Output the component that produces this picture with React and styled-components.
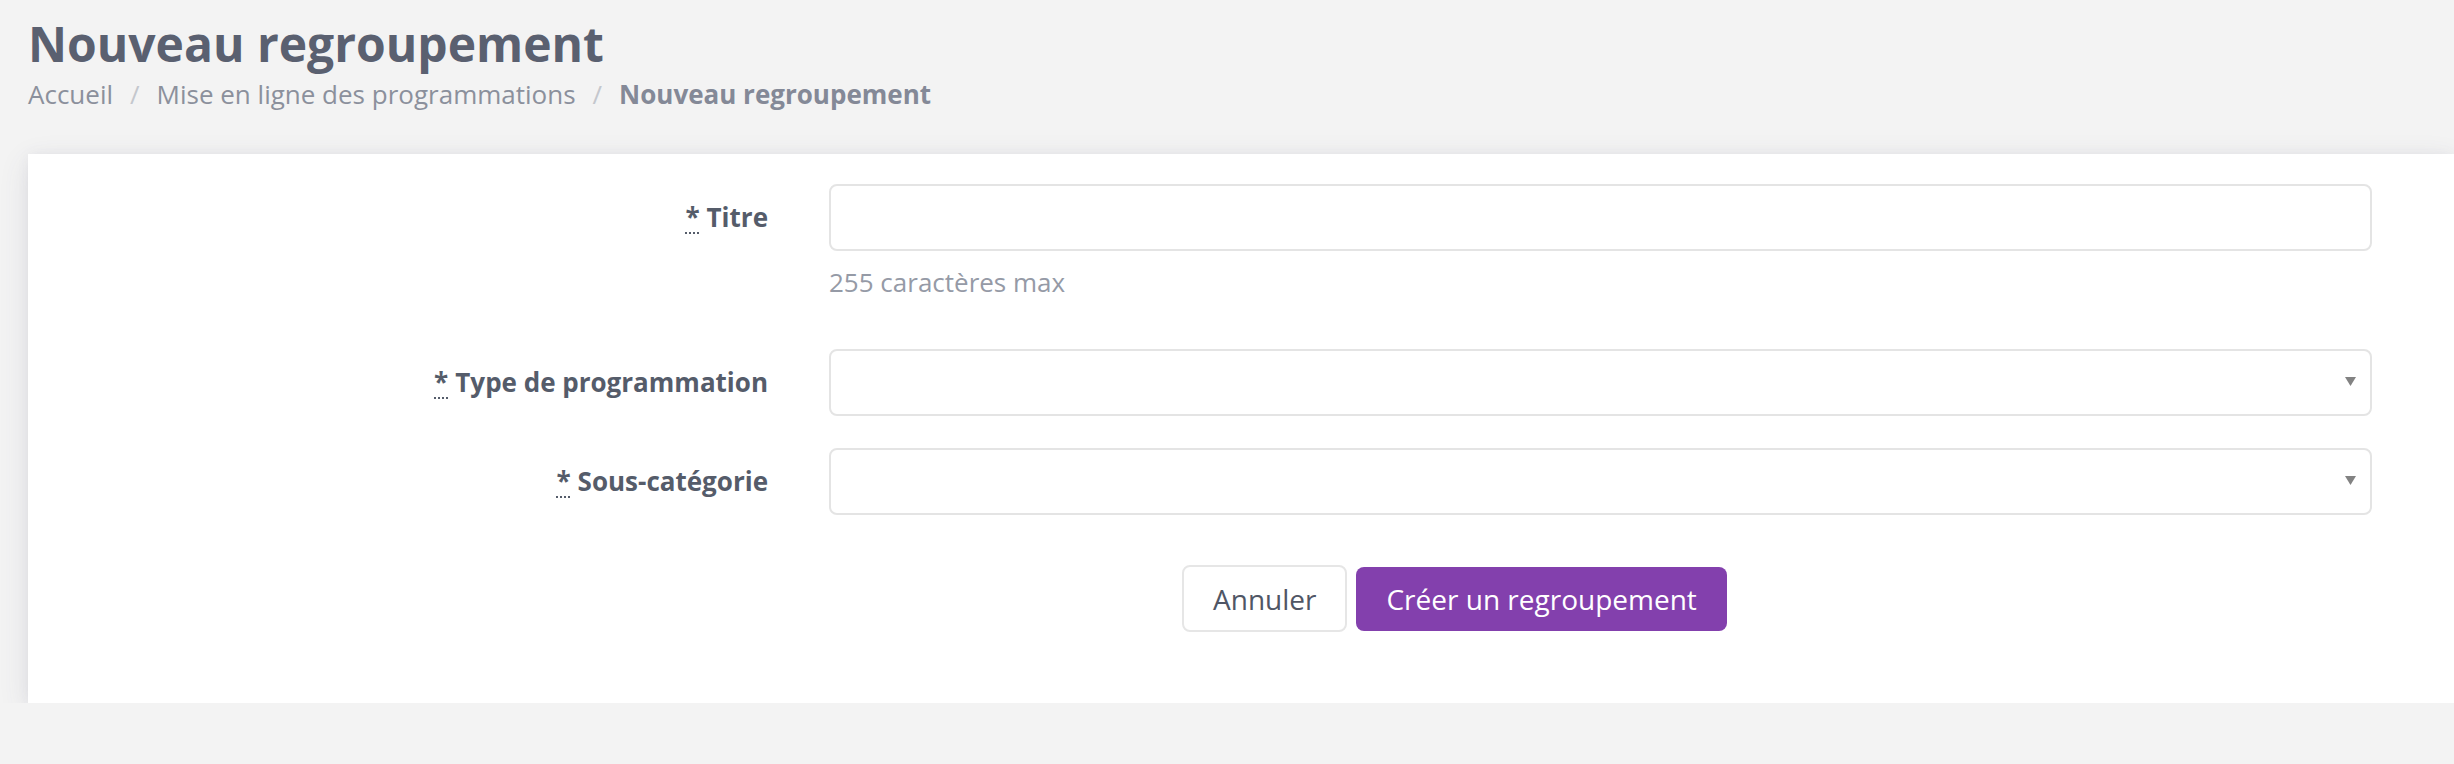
import React from "react";
import styled, { createGlobalStyle } from "styled-components";

const GlobalStyle = createGlobalStyle`
  html, body {
    margin: 0;
    padding: 0;
    background: #f3f3f3;
    overflow: hidden;
  }
  body {
    font-family: "Open Sans", "DejaVu Sans", sans-serif;
    color: #555c6a;
  }
  * { box-sizing: border-box; }
`;

const Page = styled.div`
  padding: 15px 0 0 28px;
`;

const Header = styled.header`
  margin-bottom: 42px;
`;

const Title = styled.h1`
  margin: 0;
  font-size: 48px;
  line-height: 58px;
  font-weight: 700;
  color: #5a6070;
`;

const Breadcrumb = styled.nav`
  display: flex;
  align-items: center;
  margin-top: 3px;
  font-size: 26px;
  line-height: 36px;
  color: #8b909c;
`;

const Crumb = styled.span`
  font-weight: ${(p) => (p.$active ? 700 : 400)};
  color: ${(p) => (p.$active ? "#848997" : "#8b909c")};
`;

const Sep = styled.span`
  color: #c4c7cd;
  padding: 0 17px;
`;

const Card = styled.section`
  background: #ffffff;
  padding: 30px 82px 71px 0;
  box-shadow: 0 8px 28px rgba(70, 78, 110, 0.12), 0 0 12px rgba(70, 78, 110, 0.05);
`;

const Row = styled.div`
  display: grid;
  grid-template-columns: 740px 1fr;
  column-gap: 61px;
  align-items: start;
  margin-bottom: 32px;
`;

const Label = styled.label`
  display: flex;
  justify-content: flex-end;
  align-items: center;
  height: 66px;
  font-size: 26px;
  font-weight: 700;
  color: #555c6a;
  white-space: nowrap;
`;

const Required = styled.abbr`
  text-decoration: underline dotted;
  text-decoration-thickness: 2px;
  text-underline-offset: 5px;
  cursor: help;
  margin-right: 7px;
`;

const Field = styled.div`
  display: flex;
  flex-direction: column;
`;

const TextInput = styled.input`
  height: 67px;
  width: 100%;
  border: 2px solid #e4e4e4;
  border-radius: 8px;
  background: #fff;
  padding: 0 20px;
  font: inherit;
  font-size: 28px;
  outline: none;
`;

const SelectWrap = styled.div`
  position: relative;
`;

const Select = styled.select`
  appearance: none;
  -webkit-appearance: none;
  height: 67px;
  width: 100%;
  border: 2px solid #e4e4e4;
  border-radius: 8px;
  background: #fff;
  padding: 0 20px;
  font: inherit;
  font-size: 28px;
  outline: none;
`;

const Caret = styled.svg`
  position: absolute;
  right: 16px;
  top: 28px;
  pointer-events: none;
`;

const Help = styled.span`
  margin-top: 13px;
  margin-bottom: 17px;
  font-size: 26px;
  line-height: 36px;
  color: #959aa6;
`;

const Actions = styled.div`
  display: flex;
  align-items: center;
  gap: 9px;
  padding-left: 1154px;
  margin-top: 50px;
`;

const Button = styled.button`
  font-family: "Open Sans", "DejaVu Sans", sans-serif;
  font-size: 28px;
  border-radius: 8px;
  cursor: pointer;
  padding: 0 ${(p) => (p.$primary ? 30 : 29)}px;
  height: ${(p) => (p.$primary ? 64 : 67)}px;
  border: ${(p) => (p.$primary ? "none" : "2px solid #e6e6e6")};
  background: ${(p) => (p.$primary ? "#8340ad" : "#ffffff")};
  color: ${(p) => (p.$primary ? "#ffffff" : "#505665")};
`;

function SelectField({ id }) {
  return (
    <SelectWrap>
      <Select id={id} defaultValue="">
        <option value="" />
      </Select>
      <Caret width="11" height="9" viewBox="0 0 11 9">
        <path d="M0 0 H11 L5.5 9 Z" fill="#828282" />
      </Caret>
    </SelectWrap>
  );
}

function RequiredLabel({ htmlFor, children }) {
  return (
    <Label htmlFor={htmlFor}>
      <Required title="requis">*</Required>
      {children}
    </Label>
  );
}

export default function App() {
  return (
    <>
      <GlobalStyle />
      <Page>
        <Header>
          <Title>Nouveau regroupement</Title>
          <Breadcrumb>
            <Crumb>Accueil</Crumb>
            <Sep>/</Sep>
            <Crumb>Mise en ligne des programmations</Crumb>
            <Sep>/</Sep>
            <Crumb $active>Nouveau regroupement</Crumb>
          </Breadcrumb>
        </Header>
        <Card>
          <form onSubmit={(e) => e.preventDefault()}>
            <Row>
              <RequiredLabel htmlFor="titre">Titre</RequiredLabel>
              <Field>
                <TextInput id="titre" type="text" maxLength={255} />
                <Help>255 caractères max</Help>
              </Field>
            </Row>
            <Row>
              <RequiredLabel htmlFor="type">Type de programmation</RequiredLabel>
              <Field>
                <SelectField id="type" />
              </Field>
            </Row>
            <Row>
              <RequiredLabel htmlFor="souscat">Sous-catégorie</RequiredLabel>
              <Field>
                <SelectField id="souscat" />
              </Field>
            </Row>
            <Actions>
              <Button type="button">Annuler</Button>
              <Button type="submit" $primary>
                Créer un regroupement
              </Button>
            </Actions>
          </form>
        </Card>
      </Page>
    </>
  );
}
